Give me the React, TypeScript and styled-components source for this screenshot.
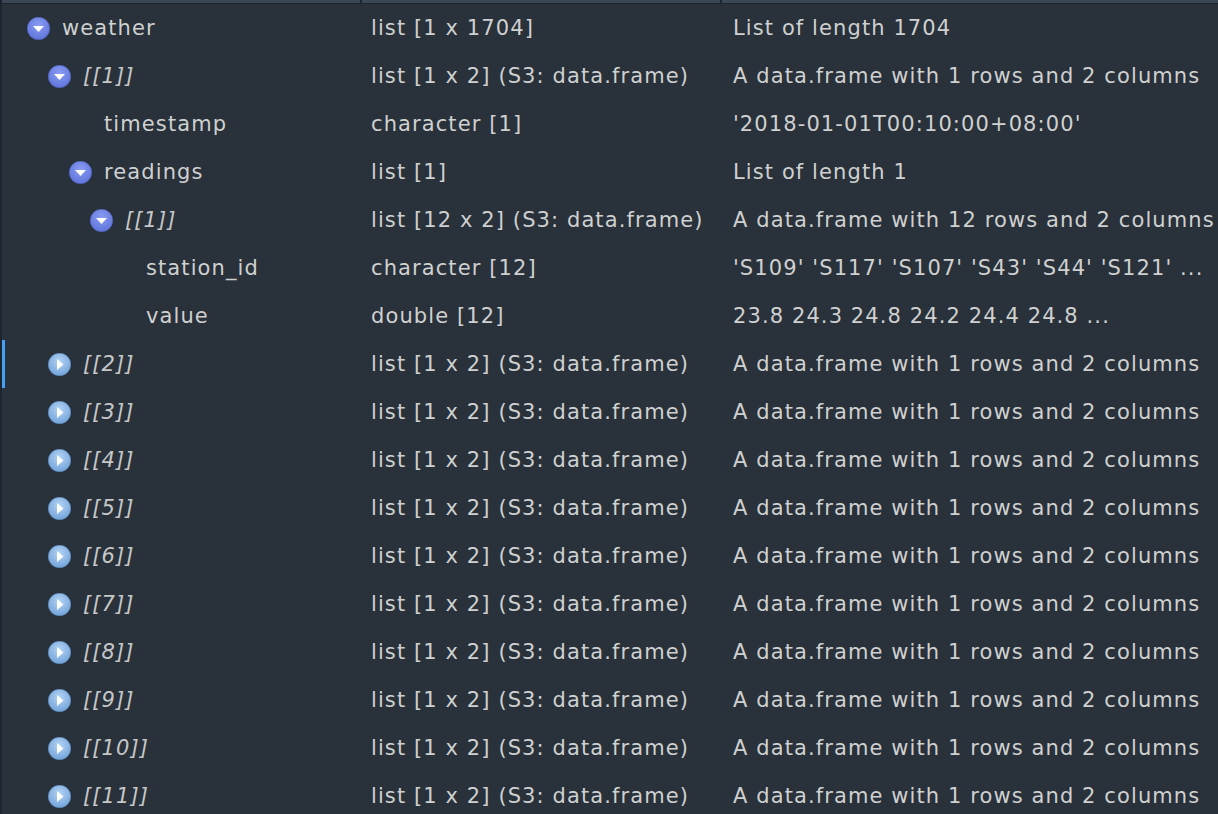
import React from "react";
import styled, { createGlobalStyle } from "styled-components";

const Global = createGlobalStyle`
  html, body { margin: 0; padding: 0; background: #29313a; overflow: hidden; }
  #root { width: 1218px; height: 814px; }
`;

const Frame = styled.div`
  width: 1218px;
  height: 814px;
  overflow: hidden;
  background: #29313a;
  border-left: 2px solid #1c2630;
  box-sizing: border-box;
  font-family: "DejaVu Sans", "Liberation Sans", sans-serif;
  font-size: 21px;
  letter-spacing: 1.1px;
  color: #cfd0d0;
`;

const HeaderBand = styled.div`
  display: grid;
  grid-template-columns: 358px 358px 1fr;
  column-gap: 2px;
  height: 4px;
  background: #1c2630;
`;

const HeaderCell = styled.div`
  background: #3b4754;
  height: 3px;
`;

const Row = styled.div<{ $selected?: boolean }>`
  display: grid;
  grid-template-columns: 369px 362px 1fr;
  height: 48px;
  align-items: center;
  position: relative;
  white-space: nowrap;
  line-height: 24px;
  &::before {
    content: "";
    display: ${(p) => (p.$selected ? "block" : "none")};
    position: absolute;
    left: 0;
    top: 0;
    width: 3px;
    height: 48px;
    background: #45a2f2;
  }
`;

const NameCell = styled.div<{ $level: number }>`
  display: flex;
  align-items: center;
  padding-left: ${(p) => 25 + p.$level * 21}px;
  gap: 12px;
`;

const IconSlot = styled.div`
  width: 23px;
  height: 23px;
  flex: none;
  & > svg {
    display: block;
  }
`;

const NameText = styled.span<{ $italic?: boolean }>`
  font-style: ${(p) => (p.$italic ? "italic" : "normal")};
  color: ${(p) => (p.$italic ? "#c6c7c7" : "#cfd0d0")};
`;

const TypeCell = styled.div`
  overflow: hidden;
`;

const ValueCell = styled.div`
  overflow: hidden;
`;

const ExpandedIcon = () => (
  <svg width="23" height="23" viewBox="0 0 23 23">
    <defs>
      <radialGradient id="gexp" cx="50%" cy="35%" r="65%">
        <stop offset="0%" stopColor="#8a9cf2" />
        <stop offset="100%" stopColor="#6075dc" />
      </radialGradient>
    </defs>
    <circle cx="11.5" cy="11.5" r="11.2" fill="url(#gexp)" stroke="#4f63c0" strokeWidth="0.6" />
    <polygon points="6,9 17,9 11.5,15" fill="#ffffff" />
  </svg>
);

const CollapsedIcon = () => (
  <svg width="23" height="23" viewBox="0 0 23 23">
    <defs>
      <radialGradient id="gcol" cx="50%" cy="35%" r="65%">
        <stop offset="0%" stopColor="#b3d3f4" />
        <stop offset="100%" stopColor="#74a4da" />
      </radialGradient>
    </defs>
    <circle cx="11.5" cy="11.5" r="11.2" fill="url(#gcol)" stroke="#5b8cc4" strokeWidth="0.6" />
    <polygon points="9,6 15.5,11.5 9,17" fill="#ffffff" />
  </svg>
);

type Item = {
  name: string;
  level: number;
  icon?: "open" | "closed";
  italic?: boolean;
  type: string;
  value: string;
  selected?: boolean;
};

const items: Item[] = [
  { name: "weather", level: 0, icon: "open", type: "list [1 x 1704]", value: "List of length 1704" },
  { name: "[[1]]", level: 1, icon: "open", italic: true, type: "list [1 x 2] (S3: data.frame)", value: "A data.frame with 1 rows and 2 columns" },
  { name: "timestamp", level: 2, type: "character [1]", value: "'2018-01-01T00:10:00+08:00'" },
  { name: "readings", level: 2, icon: "open", type: "list [1]", value: "List of length 1" },
  { name: "[[1]]", level: 3, icon: "open", italic: true, type: "list [12 x 2] (S3: data.frame)", value: "A data.frame with 12 rows and 2 columns" },
  { name: "station_id", level: 4, type: "character [12]", value: "'S109' 'S117' 'S107' 'S43' 'S44' 'S121' ..." },
  { name: "value", level: 4, type: "double [12]", value: "23.8 24.3 24.8 24.2 24.4 24.8 ..." },
];

for (let i = 2; i <= 11; i++) {
  items.push({
    name: `[[${i}]]`,
    level: 1,
    icon: "closed",
    italic: true,
    type: "list [1 x 2] (S3: data.frame)",
    value: "A data.frame with 1 rows and 2 columns",
    selected: i === 2,
  });
}

export default function App() {
  return (
    <>
      <Global />
      <Frame>
        <HeaderBand>
          <HeaderCell />
          <HeaderCell />
          <HeaderCell />
        </HeaderBand>
        {items.map((it, idx) => (
          <Row key={idx} $selected={it.selected}>
            <NameCell $level={it.level}>
              <IconSlot>
                {it.icon === "open" ? <ExpandedIcon /> : it.icon === "closed" ? <CollapsedIcon /> : null}
              </IconSlot>
              <NameText $italic={it.italic}>{it.name}</NameText>
            </NameCell>
            <TypeCell>{it.type}</TypeCell>
            <ValueCell>{it.value}</ValueCell>
          </Row>
        ))}
      </Frame>
    </>
  );
}
